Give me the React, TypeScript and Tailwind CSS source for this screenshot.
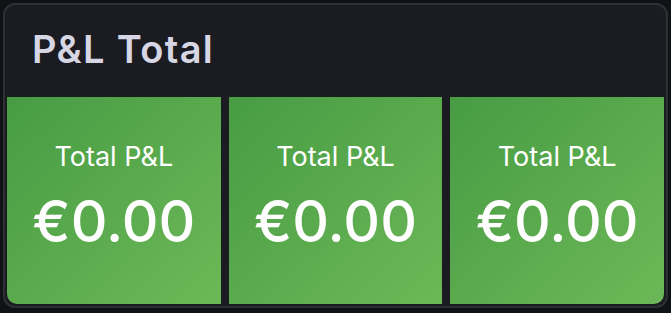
export default function App() {
  const cells = ["a", "b", "c"];
  return (
    <div className="h-[313px] w-[671px] bg-[#111216] p-[3px] font-['Inter',sans-serif]">
      <div className="flex h-[305px] flex-col overflow-hidden rounded-[12px] border-2 border-[#2f3036] bg-[#1b1c21]">
        <div className="flex h-[92px] items-center px-[27px] pb-[4px]">
          <h2 className="text-[38px] font-semibold leading-none tracking-[0.035em] text-[#d6d6e4]">P&amp;L Total</h2>
        </div>
        <div className="flex flex-1 gap-[8px] px-[2px] pb-[2px]">
          {cells.map((k, i) => (
            <div
              key={k}
              className={
                "flex flex-1 flex-col items-center bg-gradient-to-br from-[#479c43] to-[#6cb858] pt-[46px] text-white " +
                (i === 0 ? "rounded-bl-[10px]" : i === 2 ? "rounded-br-[10px]" : "")
              }
            >
              <div className="text-[27px] leading-none">Total P&amp;L</div>
              <div className="mt-[23px] text-[57px] font-medium leading-none">€0.00</div>
            </div>
          ))}
        </div>
      </div>
    </div>
  );
}
